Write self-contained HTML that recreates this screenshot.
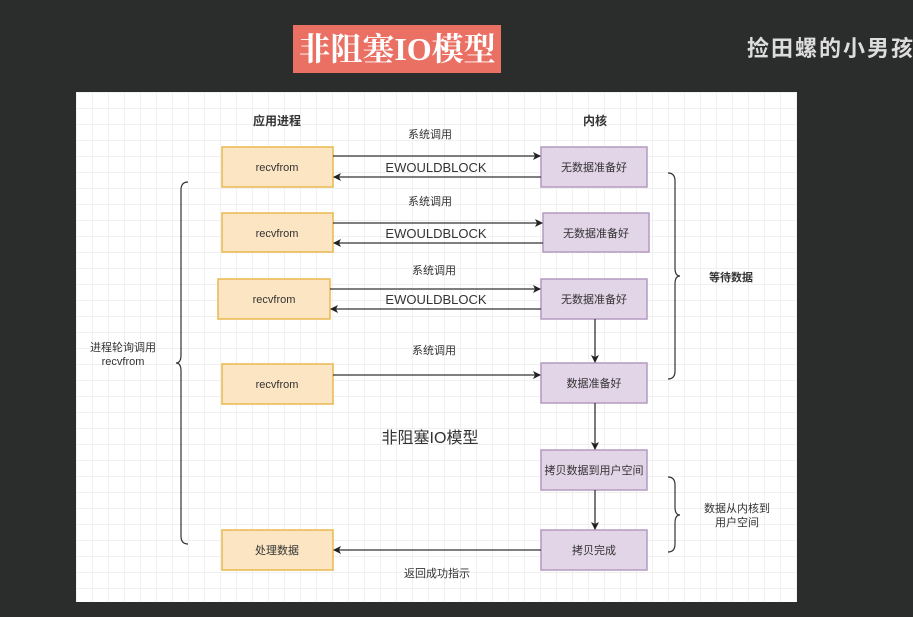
<!DOCTYPE html>
<html><head><meta charset="utf-8"><style>
body{margin:0;width:913px;height:617px;background:#2b2c2c;overflow:hidden;position:relative;font-family:"Liberation Sans","Noto Sans CJK SC",sans-serif}
.title{position:absolute;left:293px;top:25px;width:208px;height:48px;background:#e97063;color:#fff;font-family:"Liberation Serif","Noto Serif CJK SC",serif;font-size:32px;line-height:48px;text-align:center;font-weight:bold}
.wm{position:absolute;left:747px;top:31px;color:#ddd;font-size:22px;font-weight:bold;letter-spacing:2px;white-space:nowrap}
.canvas{position:absolute;left:76px;top:92px;width:721px;height:510px;background-color:#fff;background-image:linear-gradient(#f0f0f0 1px,transparent 1px),linear-gradient(90deg,#f0f0f0 1px,transparent 1px);background-size:16px 16px}
svg{position:absolute;left:0;top:0}
</style></head><body>
<div class="title">非阻塞IO模型</div>
<div class="wm">捡田螺的小男孩</div>
<div class="canvas"></div>
<svg width="913" height="617" font-family="Liberation Sans, Noto Sans CJK SC, sans-serif">
<defs><marker id="a" markerWidth="8" markerHeight="8" refX="7" refY="4" orient="auto" markerUnits="userSpaceOnUse"><path d="M0,0 L8,4 L0,8 L2,4z" fill="#222"/></marker></defs>
<g fill="#fce5c3" stroke="#e8b84e" stroke-width="1.5">
<rect x="222" y="147" width="111" height="40"/><rect x="222" y="213" width="111" height="39"/><rect x="218" y="279" width="112" height="40"/><rect x="222" y="364" width="111" height="40"/><rect x="222" y="530" width="111" height="40"/></g>
<g fill="#e3d5e8" stroke="#b49ac0" stroke-width="1.5">
<rect x="541" y="147" width="106" height="40"/><rect x="543" y="213" width="106" height="39"/><rect x="541" y="279" width="106" height="40"/><rect x="541" y="363" width="106" height="40"/><rect x="541" y="450" width="106" height="40"/><rect x="541" y="530" width="106" height="40"/></g>
<g stroke="#333" stroke-width="1.3" fill="none" marker-end="url(#a)">
<line x1="333" y1="156" x2="540" y2="156"/><line x1="541" y1="177" x2="334" y2="177"/>
<line x1="333" y1="223" x2="542" y2="223"/><line x1="543" y1="243" x2="334" y2="243"/>
<line x1="330" y1="289" x2="540" y2="289"/><line x1="541" y1="309" x2="331" y2="309"/>
<line x1="333" y1="375" x2="540" y2="375"/><line x1="541" y1="550" x2="334" y2="550"/>
<line x1="595" y1="319" x2="595" y2="362"/><line x1="595" y1="403" x2="595" y2="449"/><line x1="595" y1="490" x2="595" y2="529"/></g>
<g stroke="#333" stroke-width="1.2" fill="none">
<path d="M188,182 Q181,182 181,190 L181,355 Q181,363 176,363 Q181,363 181,371 L181,536 Q181,544 188,544"/>
<path d="M668,173 Q675,173 675,181 L675,268 Q675,276 680,276 Q675,276 675,284 L675,371 Q675,379 668,379"/>
<path d="M668,477 Q675,477 675,485 L675,507 Q675,515 680,515 Q675,515 675,523 L675,544 Q675,552 668,552"/></g>
<g font-size="11" fill="#333" text-anchor="middle">
<text x="277" y="125" font-weight="bold" font-size="12">应用进程</text><text x="595" y="125" font-weight="bold" font-size="12">内核</text>
<text x="430" y="138">系统调用</text><text x="430" y="205">系统调用</text><text x="434" y="274">系统调用</text><text x="434" y="354">系统调用</text>
<text x="436" y="172" font-size="13">EWOULDBLOCK</text><text x="436" y="238" font-size="13">EWOULDBLOCK</text><text x="436" y="304" font-size="13">EWOULDBLOCK</text>
<text x="277" y="171">recvfrom</text><text x="277" y="237">recvfrom</text><text x="274" y="303">recvfrom</text><text x="277" y="388">recvfrom</text><text x="277" y="554">处理数据</text>
<text x="594" y="171">无数据准备好</text><text x="596" y="237">无数据准备好</text><text x="594" y="303">无数据准备好</text><text x="594" y="387">数据准备好</text><text x="594" y="474">拷贝数据到用户空间</text><text x="594" y="554">拷贝完成</text>
<text x="731" y="281" font-weight="bold">等待数据</text>
<text x="123" y="351">进程轮询调用</text><text x="123" y="365">recvfrom</text>
<text x="430" y="443" font-size="16">非阻塞IO模型</text>
<text x="437" y="577">返回成功指示</text>
<text x="737" y="512">数据从内核到</text><text x="737" y="526">用户空间</text></g>
</svg>
</body></html>
